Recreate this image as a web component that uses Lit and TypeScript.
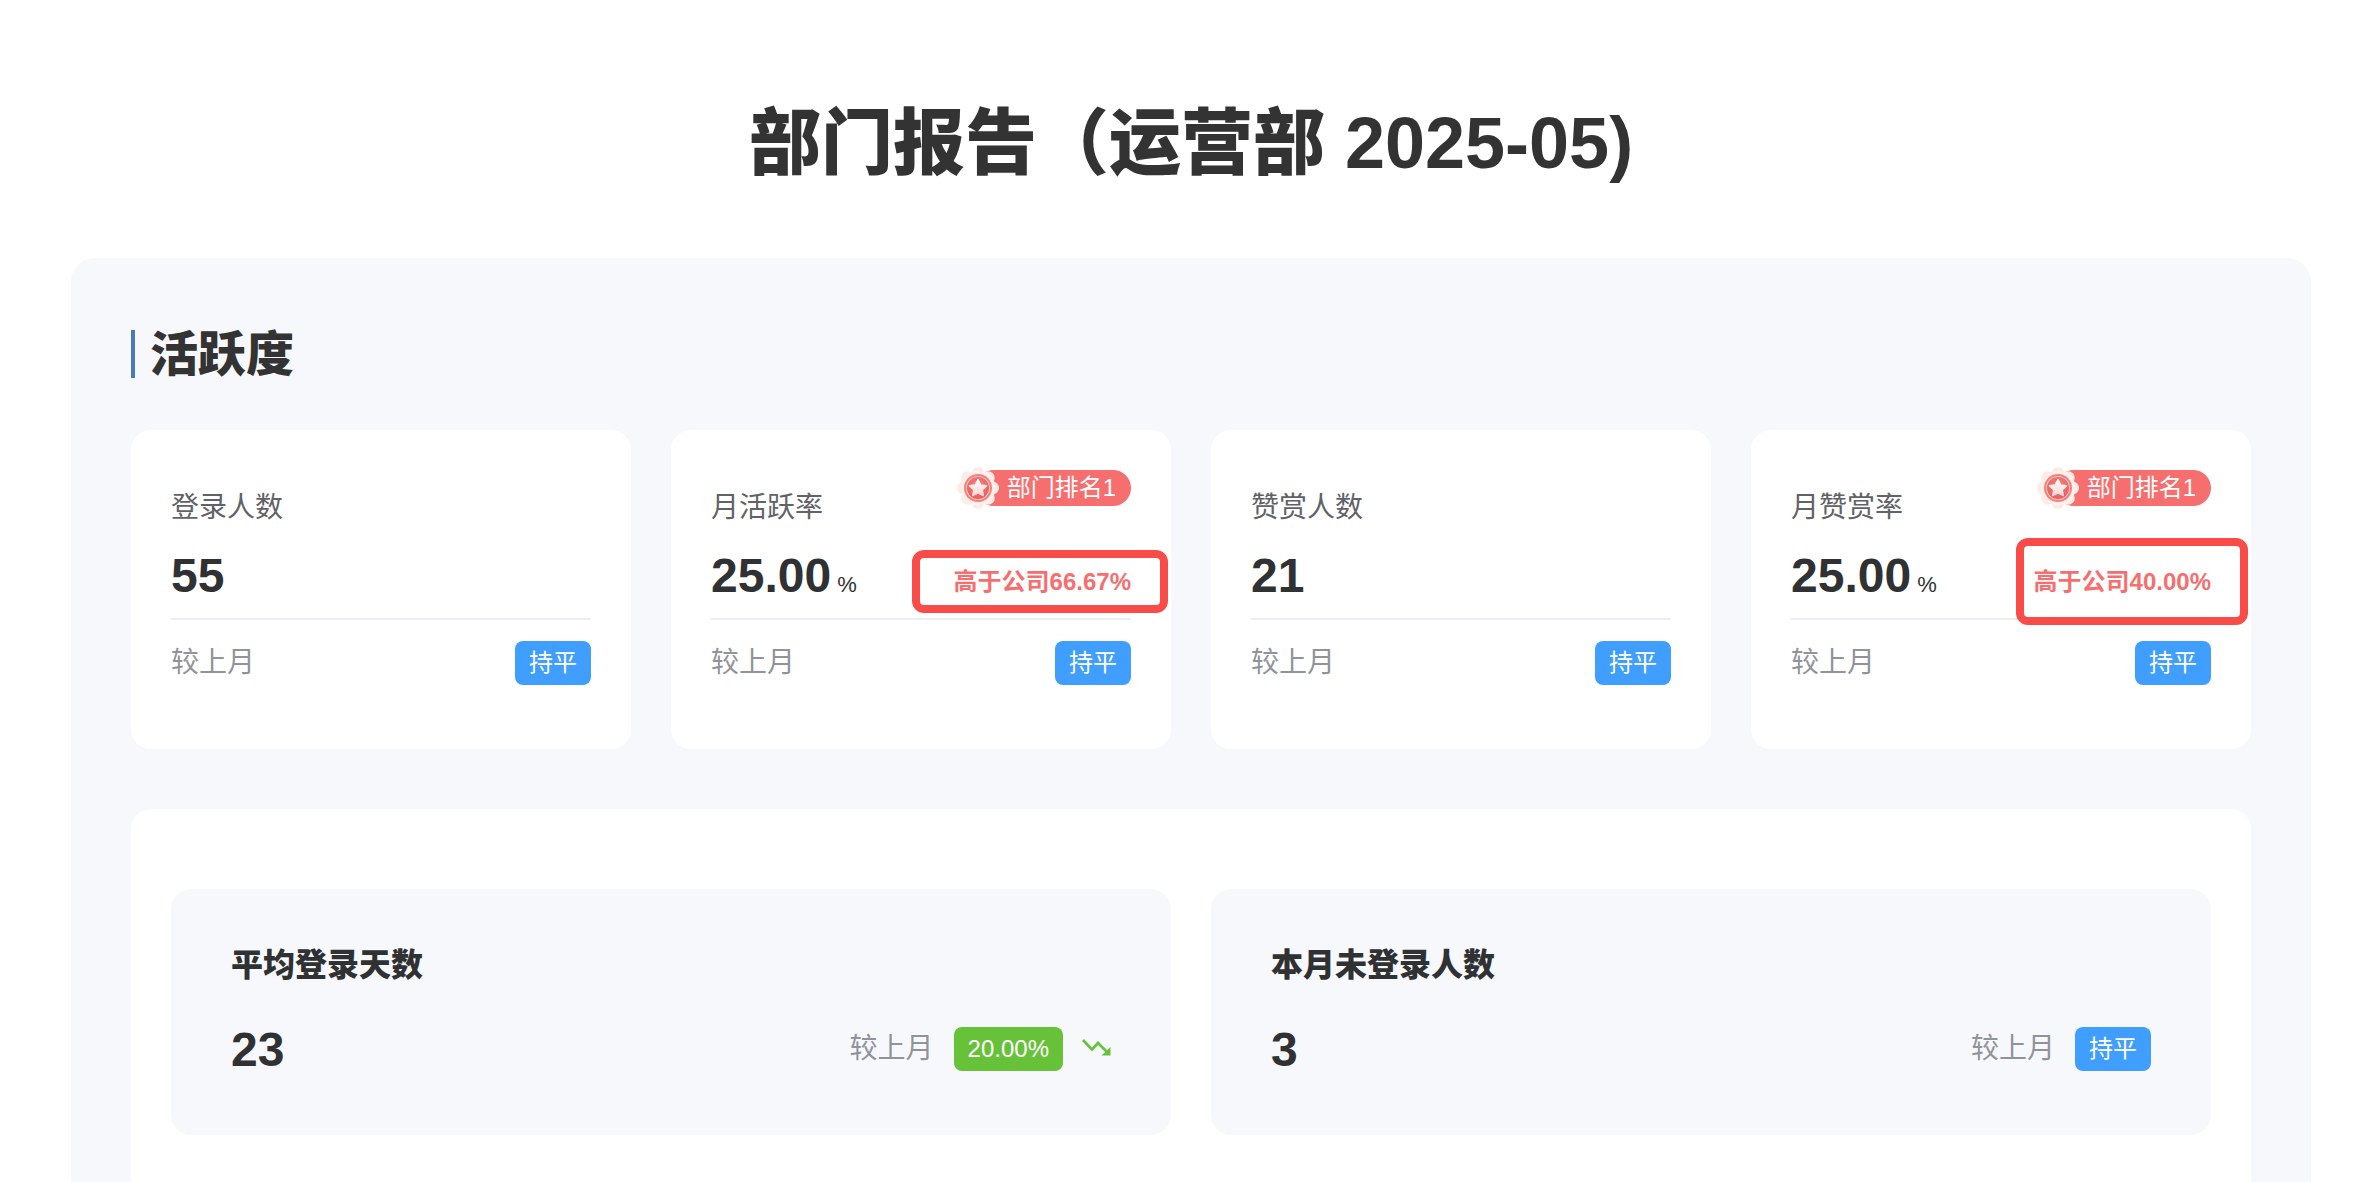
import { LitElement, html, css, svg } from "lit";
import { customElement } from "lit/decorators.js";

const medal = html`<svg class="medal" viewBox="0 0 42 42" aria-hidden="true">
  <defs>
    <radialGradient id="mg" cx="50%" cy="40%" r="65%"><stop offset="0%" stop-color="#f48a86"/><stop offset="100%" stop-color="#e45a5a"/></radialGradient>
    <linearGradient id="sg" x1="0" y1="0" x2="0" y2="1"><stop offset="0%" stop-color="#ffffff"/><stop offset="100%" stop-color="#fdd5d3"/></linearGradient>
  </defs>
  ${[0, 45, 90, 135, 180, 225, 270, 315].map((a) => svg`<circle cx="21" cy="6.5" r="6.5" fill="#feeae6" transform="rotate(${a} 21 21)"/>`)}
  <circle cx="21" cy="21" r="17.5" fill="#fff0ec"/>
  <circle cx="21" cy="21" r="14" fill="#f5807c"/>
  <circle cx="21" cy="21" r="12" fill="#fbc8c4"/>
  <circle cx="21" cy="21" r="11" fill="url(#mg)"/>
  <path d="M21 12.500l2.700 5.400 5.900.8-4.300 4.100 1 5.800-5.300-2.800-5.300 2.800 1-5.800-4.300-4.100 5.900-.8z" fill="url(#sg)" stroke="url(#sg)" stroke-width="1.400" stroke-linejoin="round"/>
</svg>`;

const trend = html`<svg class="trend" viewBox="0 0 30 18" aria-hidden="true">
  <path d="M1 1L10 10.500L16 4L25 13" fill="none" stroke="#67c23a" stroke-width="2.600"/>
  <path d="M28.500 8V16.500H19.500z" fill="#67c23a"/>
</svg>`;

interface Metric {
  label: string;
  value: string;
  unit?: string;
  rank?: boolean;
  above?: string;
  box?: string;
}

const metrics: Metric[] = [
  { label: "登录人数", value: "55" },
  { label: "月活跃率", value: "25.00", unit: "%", rank: true, above: "高于公司66.67%", box: "box-slim" },
  { label: "赞赏人数", value: "21" },
  { label: "月赞赏率", value: "25.00", unit: "%", rank: true, above: "高于公司40.00%", box: "box-tall" },
];

@customElement("app-root")
export class AppRoot extends LitElement {
  static styles = css`
    :host {
      display: block;
      height: 100vh;
      overflow: hidden;
      background: #fff;
      font-family: "Liberation Sans", "Noto Sans CJK SC", sans-serif;
      color: #303133;
    }
    .page { box-sizing: border-box; width: 2358px; padding: 106px 47px 0 71px; }
    h1 {
      margin: 0 0 80px;
      font-size: 72px;
      line-height: 74px;
      height: 72px;
      font-weight: 900;
      color: #333;
      text-align: center;
    }
    .panel {
      background: #f7f8fc;
      border-radius: 24px;
      padding: 72px 60px 60px;
    }
    h2 {
      margin: 0 0 52px;
      padding-left: 15px;
      border-left: 4px solid #4a7ab5;
      font-size: 48px;
      line-height: 50px;
      height: 48px;
      font-weight: 900;
      color: #333;
    }
    .cards { display: grid; grid-template-columns: repeat(4, 500px); gap: 40px; }
    .card {
      box-sizing: border-box;
      height: 319px;
      padding: 40px 40px 0;
      background: #fff;
      border-radius: 20px;
    }
    .head { display: flex; justify-content: space-between; height: 52px; }
    .label { align-self: flex-end; font-size: 28px; line-height: 28px; color: #606266; }
    .rank {
      position: relative;
      display: flex;
      align-items: center;
      box-sizing: border-box;
      height: 36px;
      padding: 0 15px 0 31px;
      margin-left: 21px;
      border-radius: 18px;
      background: #f76e6f;
      color: #fff;
      font-size: 24px;
      line-height: 36px;
    }
    .medal { position: absolute; left: -19px; top: -3px; width: 42px; height: 42px; }
    .value-row {
      display: flex;
      justify-content: space-between;
      align-items: baseline;
      height: 66px;
      margin-top: 30px;
      border-bottom: 2px solid #ebeef5;
    }
    .value { font-size: 48px; line-height: 48px; font-weight: 700; color: #303133; }
    .unit { font-size: 22px; font-weight: 400; margin-left: 6px; color: #303133; }
    .above { position: relative; font-size: 24px; line-height: 28px; font-weight: 700; color: #f76e6f; }
    .above span { position: relative; top: -2px; }
    .box {
      position: absolute;
      box-sizing: border-box;
      right: -37px;
      background: #fff;
      border: 8px solid #f94c48;
      border-radius: 12px;
    }
    .box-slim { left: -42px; top: -20px; bottom: -15px; }
    .box-tall { left: -18px; top: -32px; bottom: -27px; }
    .compare { display: flex; justify-content: space-between; align-items: center; margin-top: 21px; }
    .muted { font-size: 28px; line-height: 28px; color: #909399; }
    .tag {
      box-sizing: border-box;
      height: 44px;
      padding: 0 14px;
      border-radius: 8px;
      font-size: 24px;
      line-height: 44px;
      color: #fff;
      background: #409eff;
    }
    .tag.down { background: #67c23a; }
    .detail {
      margin-top: 60px;
      padding: 80px 40px;
      background: #fff;
      border-radius: 20px;
      display: grid;
      grid-template-columns: 1000px 1000px;
      gap: 40px;
    }
    .sub {
      box-sizing: border-box;
      height: 246px;
      padding: 60px 60px 0;
      background: #f7f8fc;
      border-radius: 20px;
    }
    .sub-title { font-size: 32px; line-height: 33px; height: 32px; font-weight: 900; color: #303133; }
    .sub-row { display: flex; align-items: center; height: 44px; margin-top: 46px; }
    .sub-row .value { flex: 1; line-height: 50px; height: 48px; }
    .sub-row .tag { margin-left: 20px; }
    .trend { width: 30px; height: 18px; margin: 0 -1px 0 19px; position: relative; top: -1px; }
  `;

  private metric(m: Metric) {
    return html`<div class="card">
      <div class="head">
        <div class="label">${m.label}</div>
        ${m.rank ? html`<div class="rank">${medal}部门排名1</div>` : ""}
      </div>
      <div class="value-row">
        <div class="value">${m.value}${m.unit ? html`<span class="unit">${m.unit}</span>` : ""}</div>
        ${m.above ? html`<div class="above"><div class="box ${m.box}"></div><span>${m.above}</span></div>` : ""}
      </div>
      <div class="compare"><div class="muted">较上月</div><div class="tag">持平</div></div>
    </div>`;
  }

  render() {
    return html`<div class="page">
      <h1>部门报告（运营部 2025-05)</h1>
      <section class="panel">
        <h2>活跃度</h2>
        <div class="cards">${metrics.map((m) => this.metric(m))}</div>
        <div class="detail">
          <div class="sub">
            <div class="sub-title">平均登录天数</div>
            <div class="sub-row">
              <div class="value">23</div>
              <div class="muted">较上月</div>
              <div class="tag down">20.00%</div>
              ${trend}
            </div>
          </div>
          <div class="sub">
            <div class="sub-title">本月未登录人数</div>
            <div class="sub-row">
              <div class="value">3</div>
              <div class="muted">较上月</div>
              <div class="tag">持平</div>
            </div>
          </div>
        </div>
      </section>
    </div>`;
  }
}
